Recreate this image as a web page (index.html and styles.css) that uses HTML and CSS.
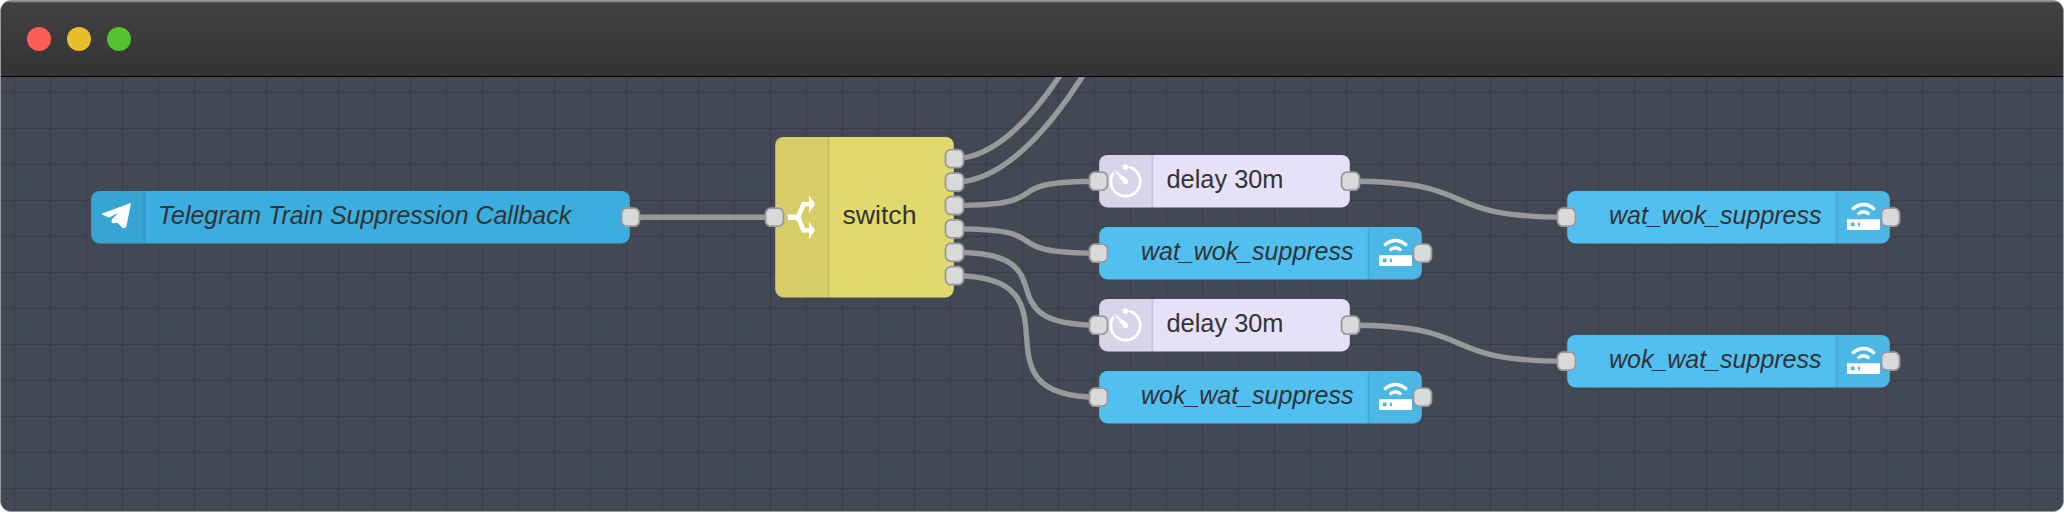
FILE: index.html
```
<!DOCTYPE html>
<html lang="en">
<head>
<meta charset="utf-8">
<title>Flow</title>
<link rel="stylesheet" href="styles.css">
</head>
<body>
<div class="window">
  <header class="titlebar">
    <span class="light close"></span>
    <span class="light minimise"></span>
    <span class="light expand"></span>
  </header>
  <main class="canvas">
    <svg class="flow" viewBox="1 77 2062 434">
      <defs>
        <rect id="port" class="port" x="-9" y="-9" width="18" height="18" rx="5.4"/>
        <g id="timer">
          <path class="timer-ring" d="M4.6-13.8A14.7 14.7 0 1 1-12.4-7.6"/>
          <circle class="glyph" cx="0" cy="-14" r="2.8"/>
          <path class="glyph" d="M-11.4-11.8L1.8-1.9A2.7 2.7 0 1 1-2.1 1.7Z"/>
        </g>
        <g id="router">
          <path class="wifi" d="M-11.3-7.7Q0-17.7 11.3-7.7M-5.8-2.8Q0-8.2 5.8-2.8"/>
          <path class="glyph" fill-rule="evenodd" d="M-15.7 2H15.7Q16.5 2 16.5 2.8V12Q16.5 12.8 15.7 12.8H-15.7Q-16.5 12.8-16.5 12V2.8Q-16.5 2-15.7 2ZM-12.8 5.2V9H-9V5.2ZM-5.6 5.2V9H-3.6V5.2Z"/>
        </g>
        <g id="delay">
          <rect class="halo" x="-1.2" y="-28.2" width="254.4" height="56.4" rx="10"/>
          <rect class="body lilac" x=".7" y="-26.3" width="250.6" height="52.6" rx="8.3"/>
          <path class="shade" d="M54-26.3H9A8.3 8.3 0 0 0 .7-18V18A8.3 8.3 0 0 0 9 26.3H54Z"/>
          <path class="divider" d="M54-26.3V26.3"/>
          <use href="#timer" x="27"/>
          <text class="label" x="68" y="6.5" textLength="117" lengthAdjust="spacingAndGlyphs">delay 30m</text>
        </g>
        <g id="mqtt">
          <rect class="halo" x="-1.2" y="-28.2" width="326.4" height="56.4" rx="10"/>
          <rect class="body sky" x=".7" y="-26.3" width="322.6" height="52.6" rx="8.3"/>
          <path class="shade" d="M270-26.3H315A8.3 8.3 0 0 1 323.3-18V18A8.3 8.3 0 0 1 315 26.3H270Z"/>
          <path class="divider" d="M270-26.3V26.3"/>
          <use href="#router" x="297"/>
        </g>
      </defs>

      <g class="wires">
        <path d="M630.5 217.2H774.5"/>
        <path d="M954.5 158.8C993 158 1030 120 1059 77L1066 66"/>
        <path d="M954.5 182.2C1000 182 1045 135 1082 77L1089 66"/>
        <path d="M954.5 205.5C1064 205.5 989 181.2 1098.5 181.2"/>
        <path d="M954.5 228.9C1064 228.9 989 253.2 1098.5 253.2"/>
        <path d="M954.5 252.3C1075.5 252.3 977.5 325.2 1098.5 325.2"/>
        <path d="M954.5 275.7C1089.5 275.7 963.5 397.2 1098.5 397.2"/>
        <path d="M1350.5 181.2C1485.5 181.2 1431.5 217.2 1566.5 217.2"/>
        <path d="M1350.5 325.2C1485.5 325.2 1431.5 361.2 1566.5 361.2"/>
      </g>

      <g transform="translate(90.5 217.2)">
        <rect class="halo" x="-1.2" y="-28.2" width="542.4" height="56.4" rx="10"/>
        <rect class="body telegram" x=".7" y="-26.3" width="538.6" height="52.6" rx="8.3"/>
        <path class="shade" d="M54-26.3H9A8.3 8.3 0 0 0 .7-18V18A8.3 8.3 0 0 0 9 26.3H54Z"/>
        <path class="divider" d="M54-26.3V26.3"/>
        <g transform="translate(27 0)">
          <path class="plane" d="M12.7-13.4L-15-3.2L-8.6-.2L3.2-6.4L-5.2 2.6V5.4L.2 5L5.8 10.6L8.2 9.6Z"/>
        </g>
        <text class="label italic" x="67.6" y="6.5" textLength="413" lengthAdjust="spacingAndGlyphs">Telegram Train Suppression Callback</text>
        <use href="#port" x="540"/>
      </g>

      <g transform="translate(774.5 217.2)">
        <rect class="halo" x="-1.2" y="-82.2" width="182.4" height="164.4" rx="10"/>
        <rect class="body yellow" x=".7" y="-80.3" width="178.6" height="160.6" rx="8.3"/>
        <path class="shade" d="M54-80.3H9A8.3 8.3 0 0 0 .7-72V72A8.3 8.3 0 0 0 9 80.3H54Z"/>
        <path class="divider" d="M54-80.3V80.3"/>
        <path class="glyph" transform="translate(27 0)" d="M-13.5-2.8H-4.8L.3-15.2H7.5V-22L13.6-13.1L7.5-4.3V-10.8H3.5L-.8 0L3.5 10.8H7.5V4.3L13.6 13.1L7.5 22V15.2H.3L-4.8 2.8H-13.5Z"/>
        <text class="label" x="68" y="6.5" textLength="74" lengthAdjust="spacingAndGlyphs">switch</text>
        <use href="#port" x="0"/>
        <use href="#port" x="180" y="-58.5"/>
        <use href="#port" x="180" y="-35.1"/>
        <use href="#port" x="180" y="-11.7"/>
        <use href="#port" x="180" y="11.7"/>
        <use href="#port" x="180" y="35.1"/>
        <use href="#port" x="180" y="58.5"/>
      </g>

      <g transform="translate(1098.5 181.2)">
        <use href="#delay"/>
        <use href="#port"/>
        <use href="#port" x="252"/>
      </g>
      <g transform="translate(1098.5 253.2)">
        <use href="#mqtt"/>
        <text class="label italic" x="42.5" y="6.5" textLength="212.5" lengthAdjust="spacingAndGlyphs">wat_wok_suppress</text>
        <use href="#port"/>
        <use href="#port" x="324"/>
      </g>
      <g transform="translate(1098.5 325.2)">
        <use href="#delay"/>
        <use href="#port"/>
        <use href="#port" x="252"/>
      </g>
      <g transform="translate(1098.5 397.2)">
        <use href="#mqtt"/>
        <text class="label italic" x="42.5" y="6.5" textLength="212.5" lengthAdjust="spacingAndGlyphs">wok_wat_suppress</text>
        <use href="#port"/>
        <use href="#port" x="324"/>
      </g>
      <g transform="translate(1566.5 217.2)">
        <use href="#mqtt"/>
        <text class="label italic" x="42.5" y="6.5" textLength="212.5" lengthAdjust="spacingAndGlyphs">wat_wok_suppress</text>
        <use href="#port"/>
        <use href="#port" x="324"/>
      </g>
      <g transform="translate(1566.5 361.2)">
        <use href="#mqtt"/>
        <text class="label italic" x="42.5" y="6.5" textLength="212.5" lengthAdjust="spacingAndGlyphs">wok_wat_suppress</text>
        <use href="#port"/>
        <use href="#port" x="324"/>
      </g>
    </svg>
  </main>
</div>
</body>
</html>
```
FILE: styles.css
```
* { box-sizing: border-box; }

body {
  margin: 0;
  background: #fff;
}

.window {
  display: flex;
  flex-direction: column;
  width: 2064px;
  height: 512px;
  border: 1px solid #989998;
  border-radius: 11px;
  overflow: hidden;
  background: #434954;
}

.titlebar {
  display: flex;
  align-items: center;
  gap: 16px;
  height: 76px;
  padding: 0 26px;
  border-top: 1px solid #878887;
  border-bottom: 1px solid #000;
  box-shadow: inset 0 1px 0 #555;
  background: linear-gradient(#424242, #333);
}

.light {
  width: 24px;
  height: 24px;
  border-radius: 50%;
}

.close { background: #ff5d55; }
.minimise { background: #e6bf2a; }
.expand { background: #53c22c; }

.canvas {
  flex: 1;
  min-height: 0;
  background-color: #434954;
  background-image:
    linear-gradient(90deg, #3a3d49 1px, transparent 1px),
    linear-gradient(#3a3d49 1px, transparent 1px);
  background-size: 36px 36px;
  background-position: 13px 15px;
}

.flow {
  display: block;
  width: 2062px;
  height: 434px;
}

.wires {
  fill: none;
  stroke: #999;
  stroke-width: 5.4;
}

.halo { fill: #434954; }
.telegram { fill: #3badde; }
.yellow { fill: #e2d96e; }
.lilac { fill: #e6e0f8; }
.sky { fill: #51c0f1; }
.shade { fill: #000; fill-opacity: .05; }

.divider {
  stroke: #000;
  stroke-opacity: .1;
  stroke-width: 1.8;
}

.glyph { fill: #fff; }

.plane {
  fill: #fff;
  stroke: #fff;
  stroke-width: 1.2;
  stroke-linejoin: round;
}

.timer-ring {
  fill: none;
  stroke: #fff;
  stroke-width: 2.7;
  stroke-linecap: round;
}

.wifi {
  fill: none;
  stroke: #fff;
  stroke-width: 3.3;
}

.port {
  fill: #d9d9d9;
  stroke: #999;
  stroke-width: 1.8;
}

.label {
  font-family: "Liberation Sans", Arial, sans-serif;
  font-size: 25.6px;
  fill: #333;
}

.italic { font-style: italic; }
```
